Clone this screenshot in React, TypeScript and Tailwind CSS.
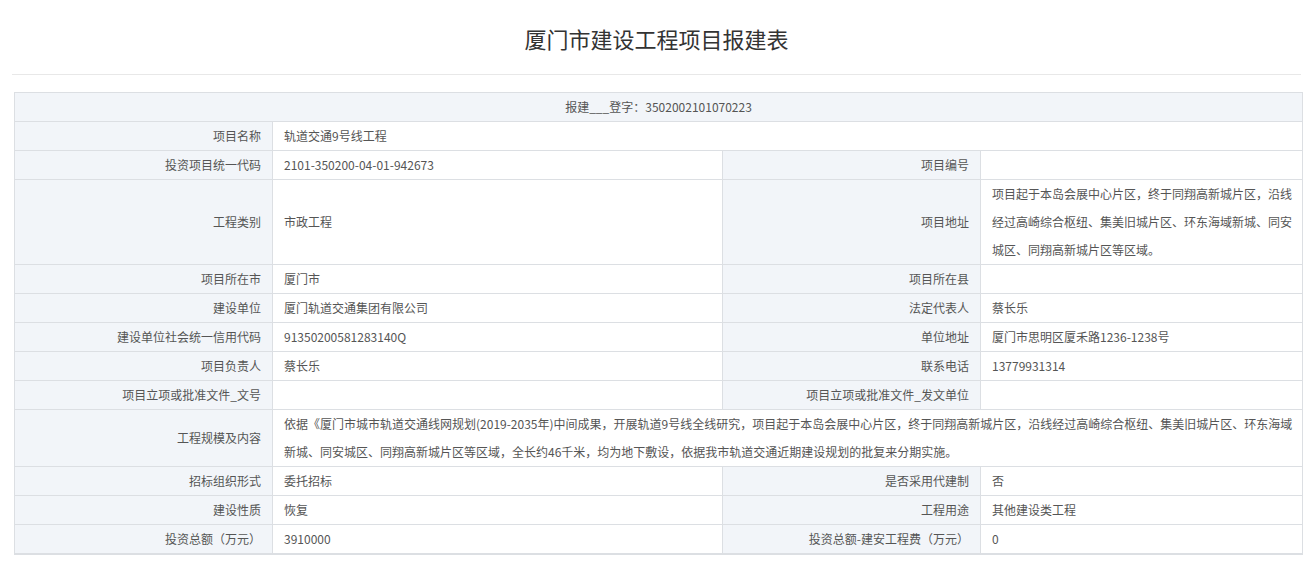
const L = 'bg-[#f2f5f9] text-right pr-[11px] pl-2 align-middle'
const V = 'bg-white text-left pl-[11px] pr-2 align-middle'
const td = 'border border-[#dcdfe3] leading-[28px] py-0'

function Pair({ a, b, c, d }: { a: string; b: string; c: string; d: string }) {
  return (
    <tr>
      <td className={`${td} ${L}`}>{a}</td>
      <td className={`${td} ${V}`}>{b}</td>
      <td className={`${td} ${L}`}>{c}</td>
      <td className={`${td} ${V}`}>{d}</td>
    </tr>
  )
}

function Wide({ a, b }: { a: string; b: string }) {
  return (
    <tr>
      <td className={`${td} ${L}`}>{a}</td>
      <td className={`${td} ${V}`} colSpan={3}>{b}</td>
    </tr>
  )
}

export default function App() {
  return (
    <div className="min-h-[561px] bg-white text-[12px] text-[#555] px-[14px] overflow-hidden" style={{ fontFamily: '"Noto Sans CJK SC", "Liberation Sans", sans-serif' }}>
      <h1 className="text-center text-[22px] text-[#333] pt-[20px] pb-[18px] leading-[36px] border-b border-[#e8e8e8] mx-[-2px]">厦门市建设工程项目报建表</h1>
      <table className="mt-[17px] w-[1288px] border-collapse table-fixed">
        <colgroup>
          <col className="w-[258px]" />
          <col className="w-[450px]" />
          <col className="w-[258px]" />
          <col className="w-[322px]" />
        </colgroup>
        <tbody>
          <tr>
            <td colSpan={4} className={`${td} bg-[#f2f5f9] text-center`}>报建___登字：3502002101070223</td>
          </tr>
          <Wide a="项目名称" b="轨道交通9号线工程" />
          <Pair a="投资项目统一代码" b="2101-350200-04-01-942673" c="项目编号" d="" />
          <Pair a="工程类别" b="市政工程" c="项目地址" d="项目起于本岛会展中心片区，终于同翔高新城片区，沿线经过高崎综合枢纽、集美旧城片区、环东海域新城、同安城区、同翔高新城片区等区域。" />
          <Pair a="项目所在市" b="厦门市" c="项目所在县" d="" />
          <Pair a="建设单位" b="厦门轨道交通集团有限公司" c="法定代表人" d="蔡长乐" />
          <Pair a="建设单位社会统一信用代码" b="91350200581283140Q" c="单位地址" d="厦门市思明区厦禾路1236-1238号" />
          <Pair a="项目负责人" b="蔡长乐" c="联系电话" d="13779931314" />
          <Pair a="项目立项或批准文件_文号" b="" c="项目立项或批准文件_发文单位" d="" />
          <Wide a="工程规模及内容" b="依据《厦门市城市轨道交通线网规划(2019-2035年)中间成果，开展轨道9号线全线研究，项目起于本岛会展中心片区，终于同翔高新城片区，沿线经过高崎综合枢纽、集美旧城片区、环东海域新城、同安城区、同翔高新城片区等区域，全长约46千米，均为地下敷设，依据我市轨道交通近期建设规划的批复来分期实施。" />
          <Pair a="招标组织形式" b="委托招标" c="是否采用代建制" d="否" />
          <Pair a="建设性质" b="恢复" c="工程用途" d="其他建设类工程" />
          <Pair a="投资总额（万元）" b="3910000" c="投资总额-建安工程费（万元）" d="0" />
          <Pair a="" b="" c="" d="" />
        </tbody>
      </table>
    </div>
  )
}
